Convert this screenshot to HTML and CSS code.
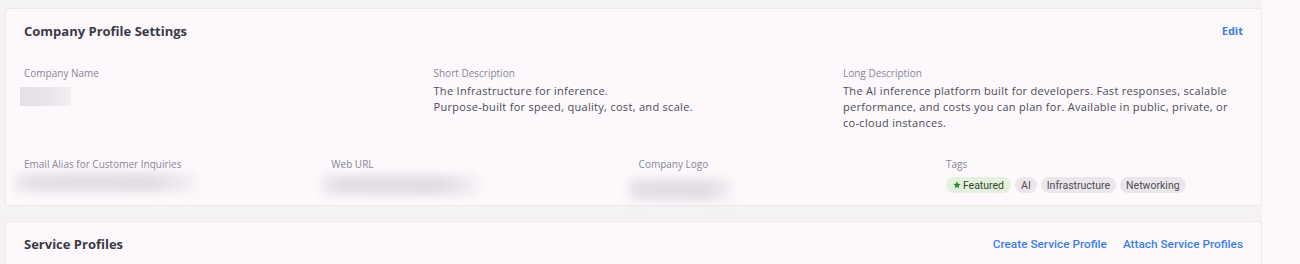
FILE: index.html
```html
<!DOCTYPE html>
<html>
<head>
<meta charset="utf-8">
<link rel="stylesheet" href="styles.css">
</head>
<body>
<div class="page">
  <main class="main">
    <section class="card">
      <div class="card-head">
        <h2 class="title">Company Profile Settings</h2>
        <a class="link link-bold">Edit</a>
      </div>
      <div class="grid3">
        <div class="field">
          <div class="label">Company Name</div>
          <div class="redact redact-name"></div>
        </div>
        <div class="field">
          <div class="label">Short Description</div>
          <div class="value">The Infrastructure for inference.<br>Purpose-built for speed, quality, cost, and scale.</div>
        </div>
        <div class="field">
          <div class="label">Long Description</div>
          <div class="value">The AI inference platform built for developers. Fast responses, scalable performance, and costs you can plan for. Available in public, private, or <span class="nowrap">co-cloud</span> instances.</div>
        </div>
      </div>
      <div class="grid4">
        <div class="field">
          <div class="label">Email Alias for Customer Inquiries</div>
          <div class="redact redact-soft redact-email"></div>
        </div>
        <div class="field">
          <div class="label">Web URL</div>
          <div class="redact redact-soft redact-url"></div>
        </div>
        <div class="field">
          <div class="label">Company Logo</div>
          <div class="redact redact-soft redact-logo"></div>
        </div>
        <div class="field">
          <div class="label">Tags</div>
          <div class="tags">
            <span class="tag tag-featured"><svg class="star" viewBox="0 0 10 10" width="8" height="8"><path d="M5 0.4 L6.35 3.3 L9.5 3.65 L7.15 5.8 L7.8 8.95 L5 7.35 L2.2 8.95 L2.85 5.8 L0.5 3.65 L3.65 3.3 Z" fill="#2f8a2f"/></svg>Featured</span>
            <span class="tag">AI</span>
            <span class="tag">Infrastructure</span>
            <span class="tag">Networking</span>
          </div>
        </div>
      </div>
    </section>
    <section class="card card-second">
      <div class="card-head">
        <h2 class="title">Service Profiles</h2>
        <div class="links">
          <a class="link">Create Service Profile</a>
          <a class="link">Attach Service Profiles</a>
        </div>
      </div>
    </section>
  </main>
</div>
</body>
</html>
```
FILE: styles.css
```css
* { box-sizing: border-box; }
html, body { margin: 0; padding: 0; }
body {
  background: #fcf8fb;
  font-family: "Open Sans", "Liberation Sans", sans-serif;
  color: #44434f;
  height: 264px;
  overflow: hidden;
}
.page {
  display: flex;
  height: 264px;
}
.main {
  width: 1262px;
  background: #f5f2f5;
  padding: 8px 0 0 5px;
  display: flex;
  flex-direction: column;
  gap: 15px;
}
.card {
  background: #fcf8fb;
  border: 1px solid #ece8eb;
  border-radius: 4px;
  padding: 13px 18px 12px 18px;
}
.card-second {
  flex: 1;
  border-bottom: none;
  border-radius: 4px 4px 0 0;
}
.card-head {
  display: flex;
  justify-content: space-between;
  align-items: center;
  height: 18px;
}
.title {
  margin: 0;
  font-size: 13px;
  font-weight: 700;
  color: #3b3a46;
  line-height: 18px;
}
.link {
  color: #3b7fe4;
  font-family: Roboto, "Liberation Sans", sans-serif;
  font-weight: 500;
  font-size: 11.8px;
  line-height: 14px;
  cursor: pointer;
}
.link-bold {
  font-family: "Open Sans", sans-serif;
  font-weight: 700;
  font-size: 11px;
}
.links {
  display: flex;
  gap: 16px;
}
.grid3 {
  display: grid;
  grid-template-columns: 400px 400px 412px;
  column-gap: 9.5px;
  margin-top: 26px;
}
.grid4 {
  display: grid;
  grid-template-columns: repeat(4, 297px);
  column-gap: 10.3px;
  margin-top: 26px;
}
.label {
  font-size: 10px;
  line-height: 14px;
  color: #878699;
}
.value {
  margin-top: 3px;
  font-size: 11px;
  line-height: 16px;
  letter-spacing: 0.3px;
  color: #4d4c56;
}
.nowrap { white-space: nowrap; }
.redact {
  background: linear-gradient(90deg, #e4e0e6 0%, #e8e4e9 50%, #f3eff3 100%);
}
.redact-name {
  margin: 7px 0 0 -4px;
  width: 51px;
  height: 19px;
}
.redact-soft {
  filter: blur(4px);
  background: linear-gradient(90deg, rgba(226,222,228,0.5) 0%, #e3dfe5 12%, #e1dde3 75%, rgba(236,232,237,0.5) 100%);
}
.redact-email {
  margin: 2px 0 -10px -9px;
  width: 180px;
  height: 19px;
}
.redact-url {
  margin: 4px 0 -10px -9px;
  width: 156px;
  height: 20px;
}
.redact-logo {
  margin: 8px 0 -14px -11px;
  width: 104px;
  height: 21px;
}
.tags {
  display: flex;
  gap: 4px;
  margin-top: 6px;
}
.tag {
  display: inline-flex;
  align-items: center;
  gap: 2px;
  height: 16px;
  padding: 0 6px;
  border-radius: 8px;
  background: #ebe6ea;
  color: #4d4c57;
  font-family: Roboto, "Liberation Sans", sans-serif;
  font-size: 10.5px;
}
.tag-featured {
  background: #e3f1dd;
  color: #35452f;
  padding-left: 7px;
  padding-right: 7px;
}
.star { display: block; }
```
